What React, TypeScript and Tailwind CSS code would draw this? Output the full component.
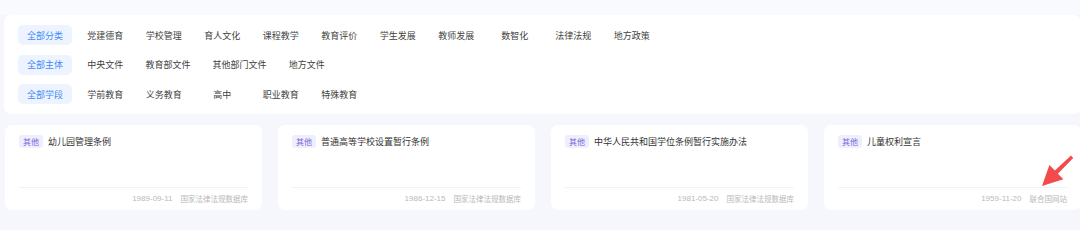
const ROWS: { all: string; items: string[] }[] = [
  {
    all: '全部分类',
    items: ['党建德育', '学校管理', '育人文化', '课程教学', '教育评价', '学生发展', '教师发展', '数智化', '法律法规', '地方政策'],
  },
  { all: '全部主体', items: ['中央文件', '教育部文件', '其他部门文件', '地方文件'] },
  { all: '全部学段', items: ['学前教育', '义务教育', '高中', '职业教育', '特殊教育'] },
]

const CARDS = [
  { title: '幼儿园管理条例', date: '1989-09-11', source: '国家法律法规数据库' },
  { title: '普通高等学校设置暂行条例', date: '1986-12-15', source: '国家法律法规数据库' },
  { title: '中华人民共和国学位条例暂行实施办法', date: '1981-05-20', source: '国家法律法规数据库' },
  { title: '儿童权利宣言', date: '1959-11-20', source: '联合国网站' },
]

const FONT = 'font-["Noto_Sans_CJK_SC","Noto_Sans",sans-serif]'

function FilterRow({ all, items }: { all: string; items: string[] }) {
  return (
    <div className="flex items-center h-5">
      <span className="h-5 px-[9px] flex items-center rounded-[5px] bg-[#edf4ff] text-[#3d8af7] text-[9px] leading-none mr-[4px]">
        {all}
      </span>
      {items.map(item => (
        <span
          key={item}
          className="min-w-[58.5px] px-[11px] text-center text-[9px] leading-none text-[#3f3f3f] whitespace-nowrap"
        >
          {item}
        </span>
      ))}
    </div>
  )
}

function Card({ title, date, source }: { title: string; date: string; source: string }) {
  return (
    <div className="h-[85px] bg-white rounded-[7px] flex flex-col px-[14px] pt-[10px]">
      <div className="flex items-center gap-[5px] h-[14px]">
        <span className="h-[13px] w-[24px] flex items-center justify-center rounded-[3px] bg-[#efeefd] text-[#7567d8] text-[8px] leading-none">
          其他
        </span>
        <span className="text-[9px] leading-none text-[#333]">{title}</span>
      </div>
      <div className="flex-1" />
      <div className="border-t border-[#f1f2f5] h-[23px] flex items-center justify-end gap-[8px] leading-none text-[#b9b9b9]">
        <span className='font-["Liberation_Sans",sans-serif] text-[8px]'>{date}</span>
        <span className="text-[7.5px]">{source}</span>
      </div>
    </div>
  )
}

export default function App() {
  return (
    <div className={`relative w-[1080px] h-[230px] overflow-hidden bg-[#f5f7fc] ${FONT}`}>
      <div className="h-[15px] bg-[#f9fafd]" />
      <div className="ml-[4px] w-[1077px]">
        <div className="bg-white rounded-[7px] pl-[14px] py-[10px] flex flex-col gap-[9.5px]">
          {ROWS.map(r => (
            <FilterRow key={r.all} all={r.all} items={r.items} />
          ))}
        </div>
        <div className="mt-[10.5px] pl-[1px] grid grid-cols-[257px_257px_257px_257px] gap-[16px]">
          {CARDS.map(c => (
            <Card key={c.title} {...c} />
          ))}
        </div>
      </div>

      {/* annotation arrow */}
      <svg className="absolute left-0 top-0 pointer-events-none" width="1080" height="230">
        <polygon
          points="1042,186 1049.4,164.9 1054.9,170.4 1071,155.6 1073.2,157.9 1057.9,173.8 1063.4,179.3"
          fill="#f34b4b"
        />
      </svg>
    </div>
  )
}
